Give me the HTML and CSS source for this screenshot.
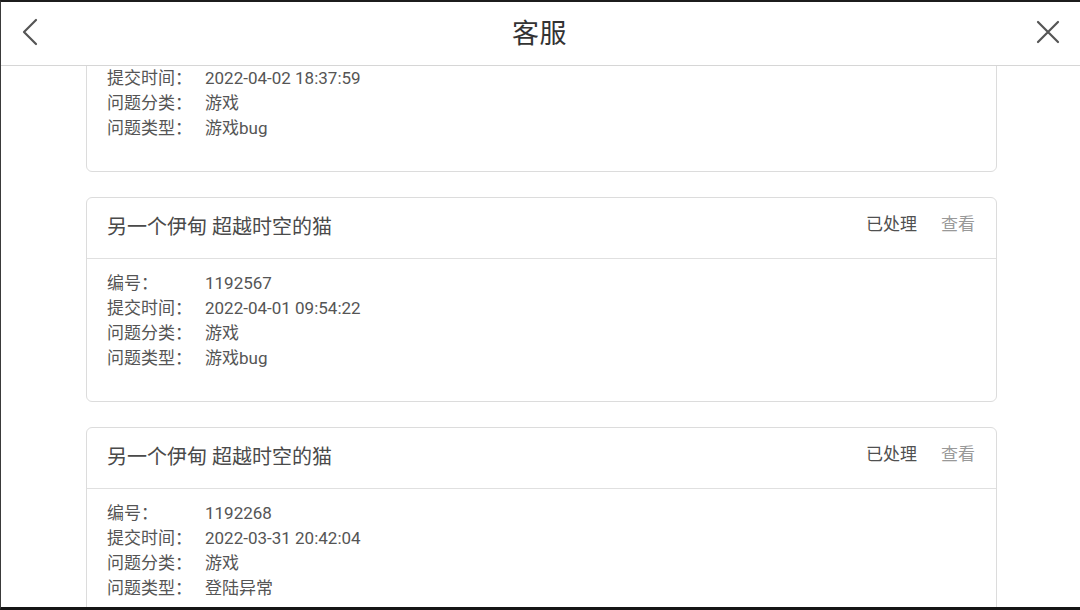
FILE: index.html
```html
<!DOCTYPE html>
<html lang="zh-CN">
<head>
  <meta charset="UTF-8" />
  <meta name="viewport" content="width=device-width, initial-scale=1.0"/>
  <title>客服</title>
  <link rel="stylesheet" href="styles.css">
</head>
<body>
  <div class="frame">
    <header class="topbar">
      <button class="icon-btn" aria-label="返回">
        <svg width="24" height="30" viewBox="0 0 24 30"><path d="M17 3 L5 15 L17 27" fill="none" stroke="#555" stroke-width="2.2" stroke-linecap="round" stroke-linejoin="round"/></svg>
      </button>
      <div class="title">客服</div>
      <button class="icon-btn" aria-label="关闭">
        <svg width="24" height="24" viewBox="0 0 24 24"><path d="M2 2 L22 22 M22 2 L2 22" fill="none" stroke="#555" stroke-width="2.2" stroke-linecap="round"/></svg>
      </button>
    </header>

    <div class="content">
      <div class="list">
        <div class="card">
          <div class="card-head">
            <span class="name">另一个伊甸 超越时空的猫</span>
            <span class="status">已处理</span>
            <span class="view">查看</span>
          </div>
          <div class="card-body">
            <span class="k">编号：</span><span>1192601</span>
            <span class="k">提交时间：</span><span>2022-04-02 18:37:59</span>
            <span class="k">问题分类：</span><span>游戏</span>
            <span class="k">问题类型：</span><span>游戏bug</span>
          </div>
        </div>

        <div class="card">
          <div class="card-head">
            <span class="name">另一个伊甸 超越时空的猫</span>
            <span class="status">已处理</span>
            <span class="view">查看</span>
          </div>
          <div class="card-body">
            <span class="k">编号：</span><span>1192567</span>
            <span class="k">提交时间：</span><span>2022-04-01 09:54:22</span>
            <span class="k">问题分类：</span><span>游戏</span>
            <span class="k">问题类型：</span><span>游戏bug</span>
          </div>
        </div>

        <div class="card">
          <div class="card-head">
            <span class="name">另一个伊甸 超越时空的猫</span>
            <span class="status">已处理</span>
            <span class="view">查看</span>
          </div>
          <div class="card-body">
            <span class="k">编号：</span><span>1192268</span>
            <span class="k">提交时间：</span><span>2022-03-31 20:42:04</span>
            <span class="k">问题分类：</span><span>游戏</span>
            <span class="k">问题类型：</span><span>登陆异常</span>
          </div>
        </div>
      </div>
    </div>
  </div>
</body>
</html>
```

FILE: styles.css
```css
* { box-sizing: border-box; }

html, body {
  margin: 0;
  padding: 0;
  height: 100%;
  overflow: hidden;
  background: #fff;
}

body {
  font-family: Roboto, "Noto Sans CJK SC", sans-serif;
  color: #555;
}

.frame {
  height: 610px;
  display: flex;
  flex-direction: column;
  border-top: 2px solid #1c1c1c;
  border-left: 1px solid #3a3a3a;
  border-bottom: 3px solid #151515;
}

.topbar {
  height: 64px;
  flex: none;
  display: flex;
  align-items: center;
  justify-content: space-between;
  padding: 0 19px 4px 17px;
  border-bottom: 1px solid #d6d6d6;
  background: #fff;
  position: relative;
  z-index: 2;
}

.icon-btn {
  border: none;
  background: none;
  padding: 0;
  width: 26px;
  height: 30px;
  display: flex;
  align-items: center;
  justify-content: center;
}

.title {
  font-size: 27px;
  color: #333;
  letter-spacing: 0.5px;
}

.content {
  flex: 1;
  overflow: hidden;
}

.list {
  margin-top: -99px;
  display: flex;
  flex-direction: column;
  align-items: center;
  gap: 25px;
}

.card {
  width: 911px;
  margin-left: 2px;
  border: 1px solid #dcdcdc;
  border-radius: 6px;
  background: #fff;
}

.card-head {
  height: 61px;
  display: flex;
  align-items: center;
  padding: 0 21px 0 20px;
  border-bottom: 1px solid #e0e0e0;
}

.name {
  flex: 1;
  font-size: 20px;
  color: #4a4a4a;
  margin-bottom: 6px;
}

.status {
  font-size: 17px;
  color: #505050;
  margin-right: 24px;
  margin-bottom: 12px;
}

.view {
  font-size: 17px;
  color: #999;
  margin-bottom: 12px;
}

.card-body {
  display: grid;
  grid-template-columns: 98px 1fr;
  padding: 12px 20px 30px;
  font-size: 17px;
  line-height: 25px;
  color: #555;
}

.k { color: #555; }
```
